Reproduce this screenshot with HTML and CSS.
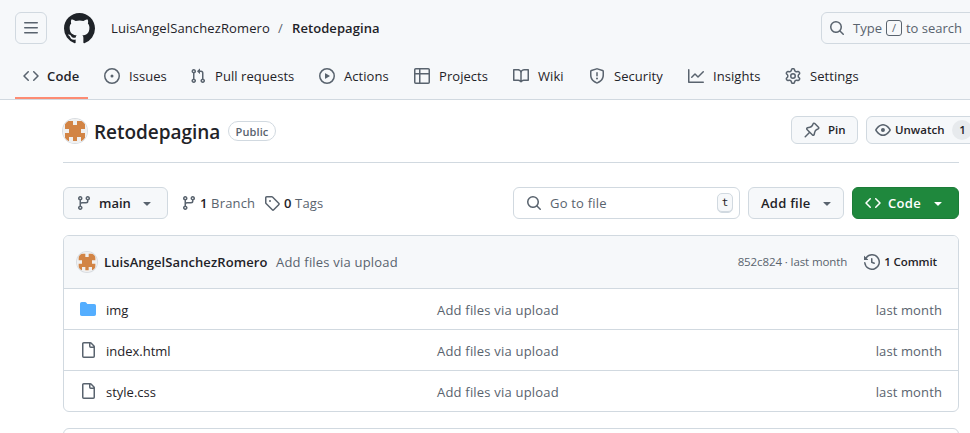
FILE: index.html
```html
<!DOCTYPE html>
<html lang="en">
<head>
<meta charset="utf-8">
<title>LuisAngelSanchezRomero/Retodepagina</title>
<link rel="stylesheet" href="styles.css">
</head>
<body>
<svg class="sprite" width="0" height="0" aria-hidden="true">
  <symbol id="code" viewBox="0 0 16 16"><path d="m11.28 3.22 4.25 4.25a.75.75 0 0 1 0 1.06l-4.25 4.25a.749.749 0 0 1-1.275-.326.749.749 0 0 1 .215-.734L13.94 8l-3.72-3.72a.749.749 0 0 1 .326-1.275.749.749 0 0 1 .734.215Zm-6.56 0a.751.751 0 0 1 1.042.018.751.751 0 0 1 .018 1.042L2.06 8l3.72 3.72a.749.749 0 0 1-.326 1.275.749.749 0 0 1-.734-.215L.47 8.53a.75.75 0 0 1 0-1.06Z"/></symbol>
  <symbol id="search" viewBox="0 0 16 16"><path d="M10.68 11.74a6 6 0 0 1-7.922-8.982 6 6 0 0 1 8.982 7.922l3.04 3.04a.749.749 0 0 1-.326 1.275.749.749 0 0 1-.734-.215ZM11.5 7a4.499 4.499 0 1 0-8.997 0A4.499 4.499 0 0 0 11.5 7Z"/></symbol>
  <symbol id="branch" viewBox="0 0 16 16"><path d="M9.5 3.25a2.25 2.25 0 1 1 3 2.122V6A2.5 2.5 0 0 1 10 8.5H6a1 1 0 0 0-1 1v1.128a2.251 2.251 0 1 1-1.5 0V5.372a2.25 2.25 0 1 1 1.5 0v1.836A2.493 2.493 0 0 1 6 7h4a1 1 0 0 0 1-1v-.628A2.25 2.25 0 0 1 9.5 3.25Zm-6 0a.75.75 0 1 0 1.5 0 .75.75 0 0 0-1.5 0Zm8.25-.75a.75.75 0 1 0 0 1.5.75.75 0 0 0 0-1.5ZM4.25 12a.75.75 0 1 0 0 1.5.75.75 0 0 0 0-1.5Z"/></symbol>
  <symbol id="caret" viewBox="0 0 16 16"><path d="m4.427 7.427 3.396 3.396a.25.25 0 0 0 .354 0l3.396-3.396A.25.25 0 0 0 11.396 7H4.604a.25.25 0 0 0-.177.427Z"/></symbol>
  <symbol id="file" viewBox="0 0 16 16"><path d="M2 1.75C2 .784 2.784 0 3.75 0h6.586c.464 0 .909.184 1.237.513l2.914 2.914c.329.328.513.773.513 1.237v9.586A1.75 1.75 0 0 1 13.25 16h-9.5A1.75 1.75 0 0 1 2 14.25Zm1.75-.25a.25.25 0 0 0-.25.25v12.5c0 .138.112.25.25.25h9.5a.25.25 0 0 0 .25-.25V6h-2.75A1.75 1.75 0 0 1 9 4.25V1.5Zm6.75.062V4.25c0 .138.112.25.25.25h2.688l-.011-.013-2.914-2.914-.013-.011Z"/></symbol>
  <symbol id="identicon" viewBox="0 0 24 24"><rect width="24" height="24" fill="#f0f0f0"/><path fill="#d28445" d="M2 2h8v4h4V2h8v8h-4v4h4v8h-4v-4h-4v4h-4v-4H6v4H2v-8h4v-4H2Z"/></symbol>
</svg>

<header class="header">
  <div class="topbar">
    <button class="menu"><svg class="icon" viewBox="0 0 16 16"><path d="M1 2.75A.75.75 0 0 1 1.75 2h12.5a.75.75 0 0 1 0 1.5H1.75A.75.75 0 0 1 1 2.75Zm0 5A.75.75 0 0 1 1.75 7h12.5a.75.75 0 0 1 0 1.5H1.75A.75.75 0 0 1 1 7.75ZM1.75 12h12.5a.75.75 0 0 1 0 1.5H1.75a.75.75 0 0 1 0-1.5Z"/></svg></button>
    <svg class="logo" viewBox="0 0 16 16"><path d="M8 0c4.42 0 8 3.58 8 8a8.013 8.013 0 0 1-5.45 7.59c-.4.08-.55-.17-.55-.38 0-.27.01-1.13.01-2.2 0-.75-.25-1.23-.54-1.48 1.78-.2 3.65-.88 3.65-3.95 0-.88-.31-1.59-.82-2.15.08-.2.36-1.02-.08-2.12 0 0-.67-.22-2.2.82-.64-.18-1.32-.27-2-.27-.68 0-1.36.09-2 .27-1.53-1.03-2.2-.82-2.2-.82-.44 1.1-.16 1.92-.08 2.12-.51.56-.82 1.28-.82 2.15 0 3.06 1.86 3.75 3.64 3.95-.23.2-.44.55-.51 1.07-.46.21-1.61.55-2.33-.66-.15-.24-.6-.83-1.23-.82-.67.01-.27.38.01.53.34.19.73.9.82 1.13.16.45.68 1.31 2.69.94 0 .67.01 1.3.01 1.49 0 .21-.15.45-.55.38A7.995 7.995 0 0 1 0 8c0-4.42 3.58-8 8-8Z"/></svg>
    <div class="crumbs"><span class="owner">LuisAngelSanchezRomero</span><span class="slash">/</span><b>Retodepagina</b></div>
    <div class="search"><svg class="icon"><use href="#search"/></svg><span>Type</span><kbd>/</kbd><span>to search</span></div>
  </div>
  <nav class="tabs">
    <a class="tab active"><svg class="icon"><use href="#code"/></svg><span>Code</span></a>
    <a class="tab"><svg class="icon" viewBox="0 0 16 16"><path d="M8 9.5a1.5 1.5 0 1 0 0-3 1.5 1.5 0 0 0 0 3Z"/><path d="M8 0a8 8 0 1 1 0 16A8 8 0 0 1 8 0ZM1.5 8a6.5 6.5 0 1 0 13 0 6.5 6.5 0 0 0-13 0Z"/></svg><span>Issues</span></a>
    <a class="tab"><svg class="icon" viewBox="0 0 16 16"><path d="M1.5 3.25a2.25 2.25 0 1 1 3 2.122v5.256a2.251 2.251 0 1 1-1.5 0V5.372A2.25 2.25 0 0 1 1.5 3.25Zm5.677-.177L9.573.677A.25.25 0 0 1 10 .854V2.5h1A2.5 2.5 0 0 1 13.5 5v5.628a2.251 2.251 0 1 1-1.5 0V5a1 1 0 0 0-1-1h-1v1.646a.25.25 0 0 1-.427.177L7.177 3.427a.25.25 0 0 1 0-.354ZM3.75 2.5a.75.75 0 1 0 0 1.5.75.75 0 0 0 0-1.5Zm0 9.5a.75.75 0 1 0 0 1.5.75.75 0 0 0 0-1.5Zm8.25.75a.75.75 0 1 0 1.5 0 .75.75 0 0 0-1.5 0Z"/></svg><span>Pull requests</span></a>
    <a class="tab"><svg class="icon" viewBox="0 0 16 16"><path d="M8 0a8 8 0 1 1 0 16A8 8 0 0 1 8 0ZM1.5 8a6.5 6.5 0 1 0 13 0 6.5 6.5 0 0 0-13 0Zm4.879-2.773 4.264 2.559a.25.25 0 0 1 0 .428l-4.264 2.559A.25.25 0 0 1 6 10.559V5.442a.25.25 0 0 1 .379-.215Z"/></svg><span>Actions</span></a>
    <a class="tab"><svg class="icon" viewBox="0 0 16 16"><path d="M0 1.75C0 .784.784 0 1.75 0h12.5C15.216 0 16 .784 16 1.75v12.5A1.75 1.75 0 0 1 14.25 16H1.75A1.75 1.75 0 0 1 0 14.25ZM6.5 6.5v8h7.75a.25.25 0 0 0 .25-.25V6.5Zm8-1.5V1.75a.25.25 0 0 0-.25-.25H6.5V5Zm-13 1.5v7.75c0 .138.112.25.25.25H5v-8ZM5 5V1.5H1.75a.25.25 0 0 0-.25.25V5Z"/></svg><span>Projects</span></a>
    <a class="tab"><svg class="icon" viewBox="0 0 16 16"><path d="M0 1.75A.75.75 0 0 1 .75 1h4.253c1.227 0 2.317.59 3 1.501A3.743 3.743 0 0 1 11.006 1h4.245a.75.75 0 0 1 .75.75v10.5a.75.75 0 0 1-.75.75h-4.507a2.25 2.25 0 0 0-1.591.659l-.622.621a.75.75 0 0 1-1.06 0l-.622-.621A2.25 2.25 0 0 0 5.258 13H.75a.75.75 0 0 1-.75-.75Zm7.251 10.324.004-5.073-.002-2.253A2.25 2.25 0 0 0 5.003 2.5H1.5v9h3.757a3.75 3.75 0 0 1 1.994.574ZM8.755 4.75l-.004 7.322a3.752 3.752 0 0 1 1.992-.572H14.5v-9h-3.495a2.25 2.25 0 0 0-2.25 2.25Z"/></svg><span>Wiki</span></a>
    <a class="tab"><svg class="icon" viewBox="0 0 16 16"><path d="M7.467.133a1.748 1.748 0 0 1 1.066 0l5.25 1.68A1.75 1.75 0 0 1 15 3.48V7c0 1.566-.32 3.182-1.303 4.682-.983 1.498-2.585 2.813-5.032 3.855a1.697 1.697 0 0 1-1.33 0c-2.447-1.042-4.049-2.357-5.032-3.855C1.32 10.182 1 8.566 1 7V3.48a1.75 1.75 0 0 1 1.217-1.667Zm.61 1.429a.25.25 0 0 0-.153 0l-5.25 1.68a.25.25 0 0 0-.174.238V7c0 1.358.275 2.666 1.057 3.86.784 1.194 2.121 2.34 4.366 3.297a.196.196 0 0 0 .154 0c2.245-.956 3.582-2.104 4.366-3.298C13.225 9.666 13.5 8.36 13.5 7V3.48a.251.251 0 0 0-.174-.237l-5.25-1.68ZM8.75 4.75v3a.75.75 0 0 1-1.5 0v-3a.75.75 0 0 1 1.5 0ZM9 10.5a1 1 0 1 1-2 0 1 1 0 0 1 2 0Z"/></svg><span>Security</span></a>
    <a class="tab"><svg class="icon" viewBox="0 0 16 16"><path d="M1.5 1.75V13.5h13.75a.75.75 0 0 1 0 1.5H.75a.75.75 0 0 1-.75-.75V1.75a.75.75 0 0 1 1.5 0Zm14.28 2.53-5.25 5.25a.75.75 0 0 1-1.06 0L7 7.06 4.28 9.78a.751.751 0 0 1-1.042-.018.751.751 0 0 1-.018-1.042l3.25-3.25a.75.75 0 0 1 1.06 0L10 7.94l4.72-4.72a.751.751 0 0 1 1.042.018.751.751 0 0 1 .018 1.042Z"/></svg><span>Insights</span></a>
    <a class="tab"><svg class="icon" viewBox="0 0 16 16"><path d="M8 0a8.2 8.2 0 0 1 .701.031C9.444.095 9.99.645 10.16 1.29l.288 1.107c.018.066.079.158.212.224.231.114.454.243.668.386.123.082.233.09.299.071l1.103-.303c.644-.176 1.392.021 1.82.63.27.385.506.792.704 1.218.315.675.111 1.422-.364 1.891l-.814.806c-.049.048-.098.147-.088.294.016.257.016.515 0 .772-.01.147.038.246.088.294l.814.806c.475.469.679 1.216.364 1.891a7.977 7.977 0 0 1-.704 1.217c-.428.61-1.176.807-1.82.63l-1.102-.302c-.067-.019-.177-.011-.3.071a5.909 5.909 0 0 1-.668.386c-.133.066-.194.158-.211.224l-.29 1.106c-.168.646-.715 1.196-1.458 1.26a8.006 8.006 0 0 1-1.402 0c-.743-.064-1.289-.614-1.458-1.26l-.289-1.106c-.018-.066-.079-.158-.212-.224a5.738 5.738 0 0 1-.668-.386c-.123-.082-.233-.09-.299-.071l-1.103.303c-.644.176-1.392-.021-1.82-.63a8.12 8.12 0 0 1-.704-1.218c-.315-.675-.111-1.422.363-1.891l.815-.806c.05-.048.098-.147.088-.294a6.214 6.214 0 0 1 0-.772c.01-.147-.038-.246-.088-.294l-.815-.806C.635 6.045.431 5.298.746 4.623a7.92 7.92 0 0 1 .704-1.217c.428-.61 1.176-.807 1.82-.63l1.102.302c.067.019.177.011.3-.071.214-.143.437-.272.668-.386.133-.066.194-.158.211-.224l.29-1.106C6.009.645 6.556.095 7.299.03 7.53.01 7.764 0 8 0Zm-.571 1.525c-.036.003-.108.036-.137.146l-.289 1.105c-.147.561-.549.967-.998 1.189-.173.086-.34.183-.5.29-.417.278-.97.423-1.529.27l-1.103-.303c-.109-.03-.175.016-.195.045-.22.312-.412.644-.573.99-.014.031-.021.11.059.19l.815.806c.411.406.562.957.53 1.456a4.709 4.709 0 0 0 0 .582c.032.499-.119 1.05-.53 1.456l-.815.806c-.081.08-.073.159-.059.19.162.346.353.677.573.989.02.03.085.076.195.046l1.102-.303c.56-.153 1.113-.008 1.53.27.161.107.328.204.501.29.447.222.85.629.997 1.189l.289 1.105c.029.109.101.143.137.146a6.6 6.6 0 0 0 1.142 0c.036-.003.108-.036.137-.146l.289-1.105c.147-.561.549-.967.998-1.189.173-.086.34-.183.5-.29.417-.278.97-.423 1.529-.27l1.103.303c.109.029.175-.016.195-.045.22-.313.411-.644.573-.99.014-.031.021-.11-.059-.19l-.815-.806c-.411-.406-.562-.957-.53-1.456a4.709 4.709 0 0 0 0-.582c-.032-.499.119-1.05.53-1.456l.815-.806c.081-.08.073-.159.059-.19a6.464 6.464 0 0 0-.573-.989c-.02-.03-.085-.076-.195-.046l-1.102.303c-.56.153-1.113.008-1.53-.27a4.44 4.44 0 0 0-.501-.29c-.447-.222-.85-.629-.997-1.189l-.289-1.105c-.029-.11-.101-.143-.137-.146a6.6 6.6 0 0 0-1.142 0ZM11 8a3 3 0 1 1-6 0 3 3 0 0 1 6 0ZM9.5 8a1.5 1.5 0 1 0-3.001.001A1.5 1.5 0 0 0 9.5 8Z"/></svg><span>Settings</span></a>
  </nav>
</header>

<main class="page">
  <div class="repo-head">
    <svg class="avatar large"><use href="#identicon"/></svg>
    <h1>Retodepagina</h1>
    <span class="label">Public</span>
    <button class="btn small pin"><svg class="icon" viewBox="0 0 16 16"><path d="m11.294.984 3.722 3.722a1.75 1.75 0 0 1-.504 2.826l-1.327.613a3.089 3.089 0 0 0-1.707 2.084l-.584 2.454c-.317 1.332-1.972 1.8-2.94.832L5.75 11.311 1.78 15.28a.749.749 0 1 1-1.06-1.06l3.969-3.97-2.204-2.204c-.968-.968-.5-2.623.832-2.94l2.454-.584a3.08 3.08 0 0 0 2.084-1.707l.613-1.327a1.75 1.75 0 0 1 2.826-.504ZM6.283 9.723l2.732 2.731a.25.25 0 0 0 .42-.119l.584-2.454a4.586 4.586 0 0 1 2.537-3.098l1.328-.613a.25.25 0 0 0 .072-.404l-3.722-3.722a.25.25 0 0 0-.404.072l-.613 1.328a4.584 4.584 0 0 1-3.098 2.537l-2.454.584a.25.25 0 0 0-.119.42l2.731 2.732Z"/></svg><span>Pin</span></button>
    <button class="btn small watch"><svg class="icon" viewBox="0 0 16 16"><path d="M8 2c1.981 0 3.671.992 4.933 2.078 1.27 1.091 2.187 2.345 2.637 3.023a1.62 1.62 0 0 1 0 1.798c-.45.678-1.367 1.932-2.637 3.023C11.67 13.008 9.981 14 8 14c-1.981 0-3.671-.992-4.933-2.078C1.797 10.83.88 9.576.43 8.898a1.62 1.62 0 0 1 0-1.798c.45-.677 1.367-1.931 2.637-3.022C4.33 2.992 6.019 2 8 2ZM1.679 7.932a.12.12 0 0 0 0 .136c.411.622 1.241 1.75 2.366 2.717C5.176 11.758 6.527 12.5 8 12.5c1.473 0 2.825-.742 3.955-1.715 1.124-.967 1.954-2.096 2.366-2.717a.12.12 0 0 0 0-.136c-.412-.621-1.242-1.75-2.366-2.717C10.824 4.242 9.473 3.5 8 3.5c-1.473 0-2.825.742-3.955 1.715-1.124.967-1.954 2.096-2.366 2.717ZM8 10a2 2 0 1 1-.001-3.999A2 2 0 0 1 8 10Z"/></svg><span>Unwatch</span><span class="counter">1</span></button>
  </div>

  <div class="toolbar">
    <button class="btn main-branch"><svg class="icon"><use href="#branch"/></svg><span>main</span><svg class="icon caret"><use href="#caret"/></svg></button>
    <a class="stat branches"><svg class="icon"><use href="#branch"/></svg><span><b>1</b> Branch</span></a>
    <a class="stat"><svg class="icon" viewBox="0 0 16 16"><path d="M1 7.775V2.75C1 1.784 1.784 1 2.75 1h5.025c.464 0 .91.184 1.238.513l6.25 6.25a1.75 1.75 0 0 1 0 2.474l-5.026 5.026a1.75 1.75 0 0 1-2.474 0l-6.25-6.25A1.752 1.752 0 0 1 1 7.775Zm1.5 0c0 .066.026.13.073.177l6.25 6.25a.25.25 0 0 0 .354 0l5.025-5.025a.25.25 0 0 0 0-.354l-6.25-6.25a.25.25 0 0 0-.177-.073H2.75a.25.25 0 0 0-.25.25ZM6 5a1 1 0 1 1 0 2 1 1 0 0 1 0-2Z"/></svg><span><b>0</b> Tags</span></a>
    <div class="finder"><svg class="icon"><use href="#search"/></svg><span>Go to file</span><kbd>t</kbd></div>
    <button class="btn add"><span>Add file</span><svg class="icon caret"><use href="#caret"/></svg></button>
    <button class="btn primary"><svg class="icon"><use href="#code"/></svg><span>Code</span><svg class="icon caret"><use href="#caret"/></svg></button>
  </div>

  <section class="files">
    <div class="commit">
      <svg class="avatar"><use href="#identicon"/></svg>
      <b class="author">LuisAngelSanchezRomero</b>
      <span class="message">Add files via upload</span>
      <span class="hash">852c824 · last month</span>
      <svg class="icon" viewBox="0 0 16 16"><path d="m.427 1.927 1.215 1.215a8.002 8.002 0 1 1-1.6 5.685.75.75 0 1 1 1.493-.154 6.5 6.5 0 1 0 1.18-4.458l1.358 1.358A.25.25 0 0 1 3.896 6H.25A.25.25 0 0 1 0 5.75V2.104a.25.25 0 0 1 .427-.177ZM7.75 4a.75.75 0 0 1 .75.75v2.992l2.028.812a.75.75 0 0 1-.557 1.392l-2.5-1A.751.751 0 0 1 7 8.25v-3.5A.75.75 0 0 1 7.75 4Z"/></svg>
      <b class="count">1 Commit</b>
    </div>
    <div class="row"><svg class="icon folder" viewBox="0 0 16 16"><path d="M1.75 1A1.75 1.75 0 0 0 0 2.75v10.5C0 14.216.784 15 1.75 15h12.5A1.75 1.75 0 0 0 16 13.25v-8.5A1.75 1.75 0 0 0 14.25 3H7.5a.25.25 0 0 1-.2-.1l-.9-1.2C6.07 1.26 5.55 1 5 1H1.75Z"/></svg><span class="name">img</span><span class="message">Add files via upload</span><span class="age">last month</span></div>
    <div class="row"><svg class="icon"><use href="#file"/></svg><span class="name">index.html</span><span class="message">Add files via upload</span><span class="age">last month</span></div>
    <div class="row"><svg class="icon"><use href="#file"/></svg><span class="name">style.css</span><span class="message">Add files via upload</span><span class="age">last month</span></div>
  </section>
  <section class="readme"></section>
</main>
</body>
</html>
```
FILE: styles.css
```css
* { box-sizing: border-box; }
html { overflow: hidden; }
body {
  margin: 0;
  height: 433px;
  overflow: hidden;
  background: #fff;
  color: #1f2328;
  font: 13px/20px "Open Sans", "Noto Sans", sans-serif;
  white-space: nowrap;
}
b { font-weight: 600; }
button { font: inherit; color: inherit; padding: 0; }
.sprite { position: absolute; }
.icon { width: 16px; height: 16px; flex: none; fill: #59636e; }

.header { height: 100px; background: #f6f8fa; border-bottom: 1px solid #d1d9e0; }
.topbar { display: flex; align-items: center; height: 56px; padding-left: 15px; }
.menu {
  display: grid; place-items: center; width: 32px; height: 32px;
  border: 1px solid #d1d9e0; border-radius: 6px; background: none;
}
.logo { width: 31px; height: 31px; margin: 0 1px 0 17px; fill: #1f2328; }
.crumbs { display: flex; margin-left: 15px; flex: 1; }
.owner { width: 167px; letter-spacing: 0.12px; }
.slash { width: 14px; color: #59636e; }
.crumbs b { letter-spacing: 0.08px; }
.search {
  display: flex; align-items: center; width: 170px; height: 32px; flex: none;
  margin-right: -21px; padding-left: 7px;
  border: 1px solid #d1d9e0; border-radius: 6px; color: #59636e;
}
.search .icon { margin-right: 8px; }
.search kbd {
  width: 16px; height: 16px; margin: 0 4px 0 4px; border: 1px solid #59636e; border-radius: 3px;
  font: 11px/14px "Open Sans", sans-serif; text-align: center;
}

.tabs {
  display: grid; height: 43px; padding-left: 15px;
  grid-template-columns: 81px 86px 129px 95px 99px 76px 99px 97px 100px;
}
.tab { display: flex; align-items: center; gap: 9px; padding: 0 0 3px 8px; letter-spacing: 0.06px; }
.tab.active {
  width: 73px; gap: 8px; font-weight: 600; padding-bottom: 0; border-bottom: 2px solid #fd8c73;
}
.tab.active .icon, .tab.active span { margin-top: -1px; }
.tab.active span { letter-spacing: 0.2px; }

.page { width: 896px; margin-left: 63px; }
.repo-head { display: flex; align-items: center; height: 63px; border-bottom: 1px solid #d1d9e0; }
.avatar { width: 20px; height: 20px; margin: 0 1px; flex: none; border-radius: 50%; box-shadow: 0 0 0 1px #d9dde1; }
.avatar.large { width: 24px; height: 24px; margin: 0; }
h1 { margin: 2px 0 0 7px; width: 134px; font-size: 19px; line-height: 30px; font-weight: 600; letter-spacing: -0.05px; }
.label {
  width: 48px; height: 20px; border: 1px solid #d1d9e0; border-radius: 10px;
  color: #59636e; font-size: 11px; line-height: 19px; font-weight: 600; text-align: center; letter-spacing: 0.1px;
}
.btn {
  display: flex; align-items: center; height: 32px; flex: none;
  border: 1px solid #d1d9e0; border-radius: 6px; background: #f6f8fa; font-weight: 600;
}
.small { height: 28px; margin-top: -2px; font-size: 11.5px; }
.pin { width: 67px; margin-left: auto; padding-left: 12px; gap: 8px; }
.watch { width: 130px; margin-left: 8px; margin-right: -37px; padding-left: 8px; }
.watch .icon { margin-right: 4px; }
.counter { width: 20px; height: 20px; margin-left: 8px; border-radius: 10px; background: #e7eaed; text-align: center; }

.toolbar { display: flex; align-items: center; height: 32px; margin: 24px 0 16px; }
.main-branch { width: 105px; padding-left: 12px; }
.main-branch .icon:first-child { margin-right: 7px; }
.main-branch .caret { margin-left: 8px; }
.stat { display: flex; align-items: center; gap: 4px; color: #59636e; font-weight: 500; }
.stat span { letter-spacing: 0.15px; }
.stat b { color: #1f2328; }
.branches { width: 83px; margin-left: 13px; }
.branches span { margin-left: -1px; }
.finder {
  display: flex; align-items: center; width: 227px; height: 32px; margin-left: auto;
  padding: 0 6px 0 12px; border: 1px solid #d1d9e0; border-radius: 6px; color: #59636e;
}
.finder .icon { margin-right: 8px; }
.finder span { letter-spacing: 0.2px; }
.finder kbd {
  width: 16px; height: 20px; margin-left: auto; border: 1px solid #d1d9e0; border-radius: 5px;
  box-shadow: inset 0 -1px #d1d9e0; background: #f6f8fa; color: #1f2328;
  font: 11px/17px "DejaVu Sans Mono", monospace; text-align: center;
}
.add { width: 96px; margin-left: 8px; padding-left: 12px; }
.add span { letter-spacing: 0.25px; }
.add .caret { margin-left: auto; margin-right: 8px; }
.primary { width: 107px; margin-left: 8px; padding-left: 12px; background: #1f883d; border-color: #1c7c38; color: #fff; }
.primary .icon { fill: #fff; }
.primary span { margin-left: 7px; letter-spacing: 0.3px; }
.primary .caret { margin-left: auto; margin-right: 12px; }

.files { border: 1px solid #d1d9e0; border-radius: 6px; overflow: hidden; }
.commit { display: flex; align-items: center; height: 52px; padding: 0 21px 0 12px; background: #f6f8fa; }
.author { margin-left: 6px; width: 172px; letter-spacing: 0.09px; }
.message { color: #59636e; letter-spacing: 0.2px; }
.hash { margin-left: auto; margin-right: 17px; color: #59636e; font-size: 11.5px; letter-spacing: -0.1px; }
.count { margin-left: 4px; font-size: 11.5px; letter-spacing: -0.1px; }
.row {
  display: grid; grid-template-columns: 26px 331px 1fr auto; align-items: center;
  height: 41px; padding: 0 16px; border-top: 1px solid #d1d9e0; color: #59636e;
}
.row span { padding-top: 1px; }
.row .name { color: #1f2328; }
.age { letter-spacing: 0.12px; }
.folder { fill: #54aeff; }
.readme { height: 60px; margin-top: 16px; border: 1px solid #d1d9e0; border-radius: 6px; }
```
